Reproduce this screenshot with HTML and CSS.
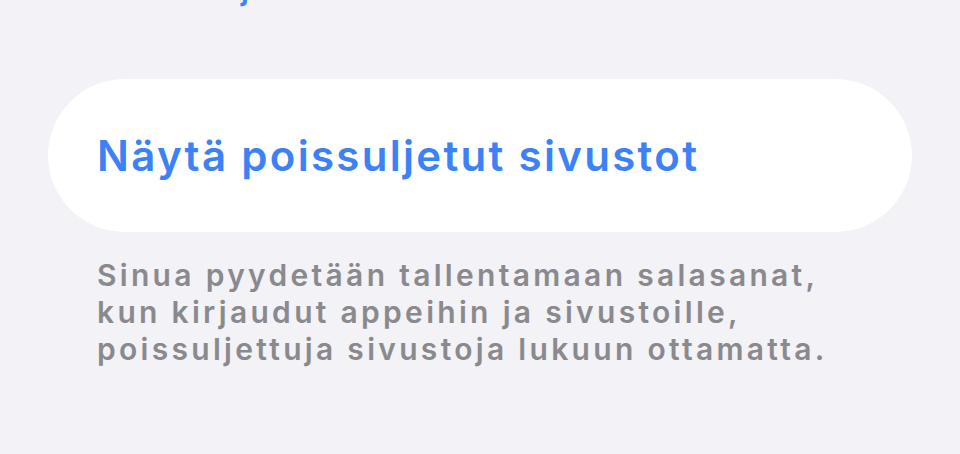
FILE: index.html
```html
<!DOCTYPE html>
<html lang="fi">
<head>
<meta charset="utf-8">
<title>Salasanat</title>
<link rel="stylesheet" href="styles.css">
</head>
<body>
<main class="settings">
  <p class="note note--prev"><a class="link" href="#">Lisätietoja…</a></p>

  <section class="group">
    <button class="row-button" type="button">Näytä poissuljetut sivustot</button>
  </section>

  <p class="note">Sinua pyydetään tallentamaan salasanat, kun kirjaudut appeihin ja sivustoille, poissuljettuja sivustoja lukuun ottamatta.</p>
</main>
</body>
</html>
```

FILE: styles.css
```css
html, body {
  margin: 0;
  padding: 0;
  background: #f2f2f7;
  overflow: hidden;
}

.settings {
  padding: 0 48px;
  font-family: Inter, "Noto Sans", "Liberation Sans", sans-serif;
}

.note {
  margin: 25px 0 0;
  padding: 0 49px;
  max-width: 760px;
  font-size: 30px;
  line-height: 37px;
  font-weight: 600;
  letter-spacing: 3.3px;
  color: #8a8a8e;
}

.note--prev {
  margin-top: -29px;
  padding-left: 40px;
  white-space: nowrap;
}

.link {
  color: #3c82f6;
  text-decoration: none;
}

.group {
  margin-top: 71px;
  background: #ffffff;
  border-radius: 77px;
  overflow: hidden;
}

.row-button {
  display: flex;
  align-items: center;
  width: 100%;
  height: 153px;
  padding: 0 49px;
  border: 0;
  background: transparent;
  font-family: inherit;
  font-size: 42px;
  font-weight: 600;
  letter-spacing: 2.3px;
  color: #3c82f6;
  text-align: left;
  cursor: pointer;
}
```
